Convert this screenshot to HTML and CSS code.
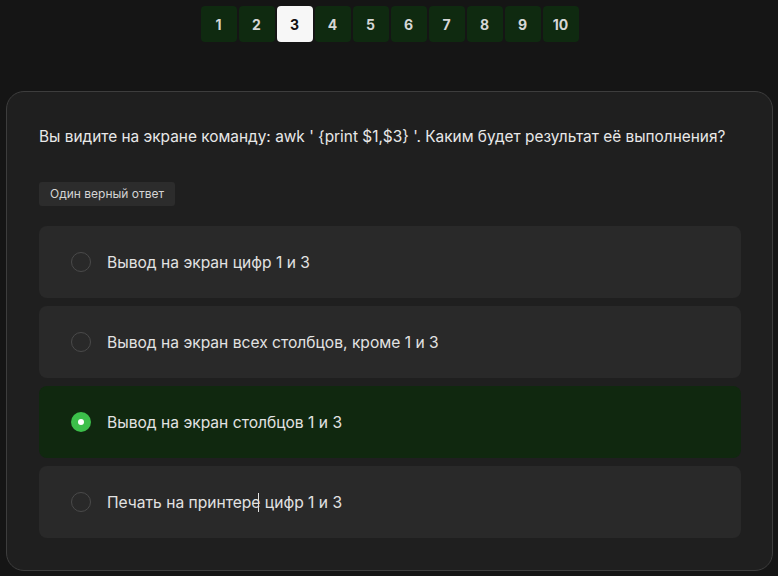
FILE: index.html
```html
<!DOCTYPE html>
<html lang="ru">
<head>
<meta charset="utf-8">
<link rel="stylesheet" href="styles.css">
</head>
<body>
<nav class="pager">
  <span class="page">1</span>
  <span class="page">2</span>
  <span class="page active">3</span>
  <span class="page">4</span>
  <span class="page">5</span>
  <span class="page">6</span>
  <span class="page">7</span>
  <span class="page">8</span>
  <span class="page">9</span>
  <span class="page">10</span>
</nav>
<section class="card">
  <p class="question">Вы видите на экране команду: awk ' {print $1,$3} '. Каким будет результат её выполнения?</p>
  <span class="tag">Один верный ответ</span>
  <div class="options">
    <div class="option"><span class="radio"></span><span class="label">Вывод на экран цифр 1 и 3</span></div>
    <div class="option"><span class="radio"></span><span class="label">Вывод на экран всех столбцов, кроме 1 и 3</span></div>
    <div class="option selected"><span class="radio"></span><span class="label">Вывод на экран столбцов 1 и 3</span></div>
    <div class="option"><span class="radio"></span><span class="label">Печать на принтере<span class="caret"></span> цифр 1 и 3</span></div>
  </div>
</section>
</body>
</html>
```

FILE: styles.css
```css
* { box-sizing: border-box; }
html, body { margin: 0; padding: 0; }
body {
  background: #151515;
  font-family: Inter, "Noto Sans", sans-serif;
  color: #e6e6e6;
  width: 778px;
  height: 576px;
  overflow: hidden;
}
.pager {
  display: flex;
  justify-content: center;
  gap: 2px;
  padding-top: 6px;
  padding-left: 1px;
}
.page {
  width: 36px;
  height: 36px;
  border-radius: 4px;
  background: #0f2a10;
  color: #d6d6d6;
  font-weight: 700;
  font-size: 14px;
  display: flex;
  align-items: center;
  justify-content: center;
}
.page.active {
  background: #f7f7f7;
  color: #111;
}
.card {
  margin: 49px 5px 0 6px;
  height: 480px;
  background: #1f1f1f;
  border: 1px solid #3d3d3d;
  border-radius: 18px;
  padding: 32px 32px 32px 32px;
}
.question {
  margin: 0;
  font-size: 15.4px;
  line-height: 24px;
  color: #e8e8e8;
  padding-top: 1px;
}
.tag {
  display: inline-block;
  margin-top: 33px;
  height: 24px;
  line-height: 24px;
  padding: 0 11px;
  background: #2c2c2c;
  border-radius: 3px;
  font-size: 12px;
  color: #d4d4d4;
}
.options {
  margin-top: 20px;
  display: flex;
  flex-direction: column;
  gap: 8px;
}
.option {
  height: 72px;
  background: #292929;
  border-radius: 8px;
  display: flex;
  align-items: center;
  padding-left: 32px;
  gap: 16px;
  margin-right: -1px;
}
.option.selected { background: #10280f; }
.radio {
  width: 20px;
  height: 20px;
  border-radius: 50%;
  border: 1px solid #4a4a4a;
  flex: none;
}
.selected .radio {
  border: none;
  background: #3cbf4a;
  display: flex;
  align-items: center;
  justify-content: center;
}
.selected .radio::after {
  content: "";
  width: 6px;
  height: 6px;
  border-radius: 50%;
  background: #ffffff;
}
.label {
  font-size: 15.6px;
  color: #e2e2e2;
}
.caret {
  display: inline-block;
  width: 1px;
  height: 19px;
  background: #e2e2e2;
  vertical-align: -4px;
  margin-left: -2px;
  margin-right: 1px;
}
```
